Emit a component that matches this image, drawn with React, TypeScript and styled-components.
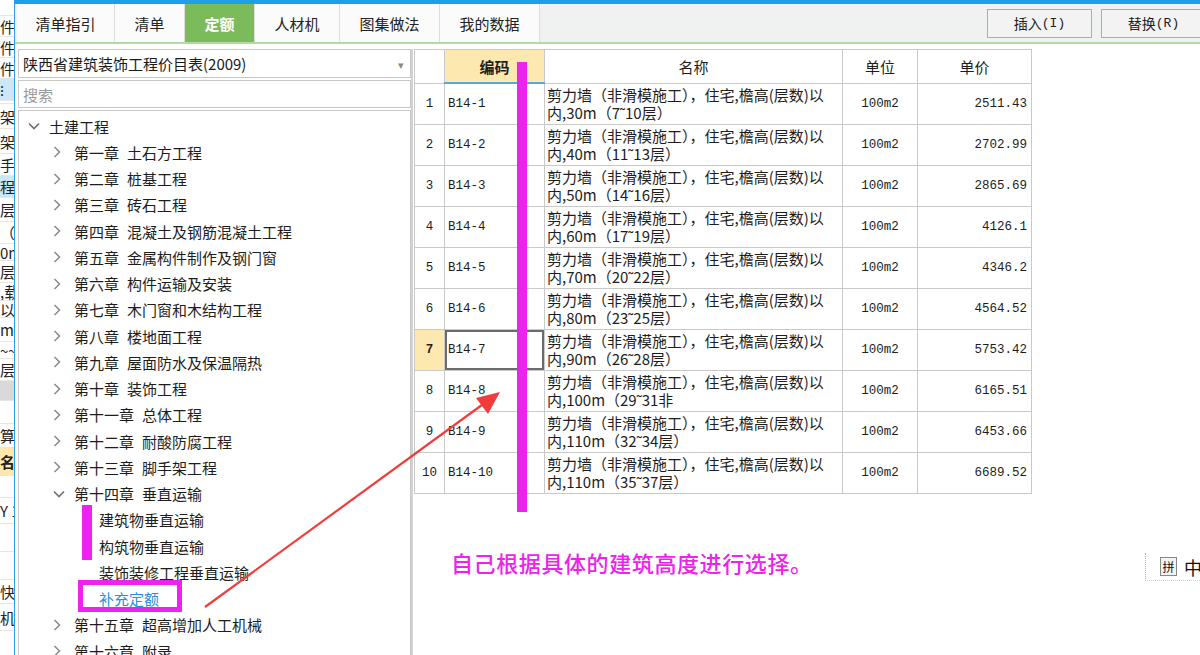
import styled, { createGlobalStyle } from 'styled-components';

const GlobalStyle = createGlobalStyle`
  body {
    margin: 0;
    background: #ffffff;
    font-family: "Noto Sans CJK SC", "Noto Sans", sans-serif;
  }
`;

const MONO = '"Liberation Mono", "Noto Sans CJK SC", monospace';
const MAGENTA = '#ee22ee';

const stripRows = [
  { h: 16, t: '' },
  { h: 21, t: '件' },
  { h: 21, t: '件' },
  { h: 21, t: '件' },
  { h: 22, t: '⁝', bg: '#cce8f8' },
  { h: 3, t: '' },
  { h: 25, t: '架' },
  { h: 25, t: '架' },
  { h: 22, t: '手' },
  { h: 22, t: '程', bg: '#cce8f8' },
  { h: 24, t: '层数' },
  { h: 22, t: '（' },
  { h: 17, t: '0m' },
  { h: 22, t: '层)' },
  { h: 18, t: ',载' },
  { h: 17, t: '以内' },
  { h: 24, t: 'm(' },
  { h: 17, t: '~~' },
  { h: 22, t: '层数' },
  { h: 20, t: '', bg: '#d9d9d9' },
  { h: 23, t: '' },
  { h: 24, t: '算' },
  { h: 28, t: '名', bg: '#fde9b0', bold: true },
  { h: 22, t: '' },
  { h: 26, t: 'Y 10' },
  { h: 28, t: '' },
  { h: 28, t: '' },
  { h: 24, t: '快' },
  { h: 27, t: '机' },
];

const tabs = ['清单指引', '清单', '定额', '人材机', '图集做法', '我的数据'];
const tabWidths = [98, 70, 70, 85, 100, 100];

type TreeRow = { level: number; chapter?: string; label: string; arrow?: 'down' | 'right'; link?: boolean };

const treeRows: TreeRow[] = [
  { level: 0, label: '土建工程', arrow: 'down' },
  { level: 1, chapter: '第一章', label: '土石方工程', arrow: 'right' },
  { level: 1, chapter: '第二章', label: '桩基工程', arrow: 'right' },
  { level: 1, chapter: '第三章', label: '砖石工程', arrow: 'right' },
  { level: 1, chapter: '第四章', label: '混凝土及钢筋混凝土工程', arrow: 'right' },
  { level: 1, chapter: '第五章', label: '金属构件制作及钢门窗', arrow: 'right' },
  { level: 1, chapter: '第六章', label: '构件运输及安装', arrow: 'right' },
  { level: 1, chapter: '第七章', label: '木门窗和木结构工程', arrow: 'right' },
  { level: 1, chapter: '第八章', label: '楼地面工程', arrow: 'right' },
  { level: 1, chapter: '第九章', label: '屋面防水及保温隔热', arrow: 'right' },
  { level: 1, chapter: '第十章', label: '装饰工程', arrow: 'right' },
  { level: 1, chapter: '第十一章', label: '总体工程', arrow: 'right' },
  { level: 1, chapter: '第十二章', label: '耐酸防腐工程', arrow: 'right' },
  { level: 1, chapter: '第十三章', label: '脚手架工程', arrow: 'right' },
  { level: 1, chapter: '第十四章', label: '垂直运输', arrow: 'down' },
  { level: 2, label: '建筑物垂直运输' },
  { level: 2, label: '构筑物垂直运输' },
  { level: 2, label: '装饰装修工程垂直运输' },
  { level: 2, label: '补充定额', link: true },
  { level: 1, chapter: '第十五章', label: '超高增加人工机械', arrow: 'right' },
  { level: 1, chapter: '第十六章', label: '附录', arrow: 'right' },
];

const quotas = [
  { code: 'B14-1', h: '30m', floors: '（7˜10层）', price: '2511.43' },
  { code: 'B14-2', h: '40m', floors: '（11˜13层）', price: '2702.99' },
  { code: 'B14-3', h: '50m', floors: '（14˜16层）', price: '2865.69' },
  { code: 'B14-4', h: '60m', floors: '（17˜19层）', price: '4126.1' },
  { code: 'B14-5', h: '70m', floors: '（20˜22层）', price: '4346.2' },
  { code: 'B14-6', h: '80m', floors: '（23˜25层）', price: '4564.52' },
  { code: 'B14-7', h: '90m', floors: '（26˜28层）', price: '5753.42' },
  { code: 'B14-8', h: '100m', floors: '（29˜31非', price: '6165.51' },
  { code: 'B14-9', h: '110m', floors: '（32˜34层）', price: '6453.66' },
  { code: 'B14-10', h: '110m', floors: '（35˜37层）', price: '6689.52' },
];

const Chevron = ({ dir }: { dir: 'down' | 'right' }) =>
  dir === 'down' ? (
    <svg width="12" height="8" viewBox="0 0 12 8">
      <path d="M1 1.5 L6 6.5 L11 1.5" fill="none" stroke="#6f6f6f" strokeWidth="1.6" />
    </svg>
  ) : (
    <svg width="8" height="12" viewBox="0 0 8 12">
      <path d="M1.5 1 L6.5 6 L1.5 11" fill="none" stroke="#8a8a8a" strokeWidth="1.5" />
    </svg>
  );

export default function App() {
  const selectedRow = 7;
  return (
    <Root>
      <GlobalStyle />
      <BackStrip>
        {stripRows.map((r, i) => (
          <StripRow key={i} $h={r.h} $bg={r.bg} $bold={r.bold}>{r.t}</StripRow>
        ))}
      </BackStrip>
      <Dialog>
        <TabBar>
          {tabs.map((t, i) => (
            <Tab key={t} $w={tabWidths[i]} $active={t === '定额'}>{t}</Tab>
          ))}
          <ToolButtons>
            <ToolButton>插入<Latin>(I)</Latin></ToolButton>
            <ToolButton>替换<Latin>(R)</Latin></ToolButton>
          </ToolButtons>
        </TabBar>
        <Body>
          <LeftPanel>
            <Select>
              <span>陕西省建筑装饰工程价目表(2009)</span>
              <DropArrow>▾</DropArrow>
            </Select>
            <Search>搜索</Search>
            <Tree>
              {treeRows.map((r, i) => (
                <TreeItem key={i} $level={r.level}>
                  <ArrowBox>{r.arrow && <Chevron dir={r.arrow} />}</ArrowBox>
                  {r.chapter && <Chapter>{r.chapter}</Chapter>}
                  <TreeLabel $link={r.link}>{r.label}</TreeLabel>
                </TreeItem>
              ))}
            </Tree>
          </LeftPanel>
          <Splitter />
          <RightPanel>
            <QuotaTable>
              <colgroup>
                <col style={{ width: 30 }} />
                <col style={{ width: 100 }} />
                <col style={{ width: 298 }} />
                <col style={{ width: 75 }} />
                <col style={{ width: 114 }} />
              </colgroup>
              <thead>
                <tr>
                  <HeadCell />
                  <HeadCell $sorted>编码</HeadCell>
                  <HeadCell>名称</HeadCell>
                  <HeadCell>单位</HeadCell>
                  <HeadCell>单价</HeadCell>
                </tr>
              </thead>
              <tbody>
                {quotas.map((q, i) => (
                  <Row key={q.code}>
                    <NumCell $current={i + 1 === selectedRow}>{i + 1}</NumCell>
                    <CodeCell $selected={i + 1 === selectedRow}>{q.code}</CodeCell>
                    <NameCell>
                      <NameLine>剪力墙（非滑模施工），住宅,檐高(层数)以</NameLine>
                      <NameLine>内,{q.h}{q.floors}</NameLine>
                    </NameCell>
                    <UnitCell>100m2</UnitCell>
                    <PriceCell>{q.price}</PriceCell>
                  </Row>
                ))}
              </tbody>
            </QuotaTable>
            <Note>自己根据具体的建筑高度进行选择。</Note>
          </RightPanel>
        </Body>
      </Dialog>

      <TableMark />
      <TreeMark />
      <TreeBox />
      <ArrowLayer width="1200" height="655" viewBox="0 0 1200 655">
        <line x1="205" y1="607" x2="486" y2="402" stroke="#f23c3c" strokeWidth="2.2" />
        <polygon points="500,392 476,398 488,414" fill="#f23c3c" />
      </ArrowLayer>
      <ImeBar>
        <ImeBox>拼</ImeBox>
        <span>中</span>
      </ImeBar>
    </Root>
  );
}

const Root = styled.div`
  position: relative;
  width: 1200px;
  height: 655px;
  display: flex;
  overflow: hidden;
  background: #ffffff;
`;

const BackStrip = styled.div`
  width: 14px;
  flex-shrink: 0;
  display: flex;
  flex-direction: column;
  overflow: hidden;
  border-right: 1px solid #2f9fe3;
  background: #ffffff;
`;

const StripRow = styled.div<{ $h: number; $bg?: string; $bold?: boolean }>`
  height: ${(p) => p.$h}px;
  flex-shrink: 0;
  background: ${(p) => p.$bg || 'transparent'};
  font-size: 15px;
  font-weight: ${(p) => (p.$bold ? 700 : 400)};
  line-height: ${(p) => p.$h}px;
  white-space: nowrap;
  overflow: hidden;
  color: #222;
  border-bottom: 1px solid #e6e6e6;
  box-sizing: border-box;
`;

const Dialog = styled.div`
  flex: 1;
  display: flex;
  flex-direction: column;
  border-top: 4px solid #1e9fe6;
  min-width: 0;
`;

const TabBar = styled.div`
  height: 38px;
  display: flex;
  align-items: stretch;
  padding-left: 2px;
  background: #f0f1f1;
  border-bottom: 2px solid #b5d9a2;
  flex-shrink: 0;
`;

const Tab = styled.div<{ $w: number; $active?: boolean }>`
  width: ${(p) => p.$w}px;
  display: flex;
  align-items: center;
  justify-content: center;
  font-size: 15px;
  font-weight: ${(p) => (p.$active ? 700 : 400)};
  color: ${(p) => (p.$active ? '#ffffff' : '#222222')};
  background: ${(p) => (p.$active ? '#7cbb5b' : '#fafbfa')};
  border-right: 1px solid #dcdfdc;
  box-sizing: border-box;
`;

const ToolButtons = styled.div`
  margin-left: auto;
  display: flex;
  align-items: center;
  gap: 9px;
  margin-right: -6px;
`;

const ToolButton = styled.div`
  width: 105px;
  height: 29px;
  flex-shrink: 0;
  display: flex;
  align-items: center;
  justify-content: center;
  border: 1px solid #adadad;
  background: #f3f3f3;
  box-sizing: border-box;
  font-size: 14px;
  color: #222;
`;

const Latin = styled.span`
  font-family: ${MONO};
  font-size: 13px;
`;

const Body = styled.div`
  flex: 1;
  display: flex;
  padding: 5px 0 0 3px;
  min-height: 0;
`;

const LeftPanel = styled.div`
  width: 393px;
  flex-shrink: 0;
  display: flex;
  flex-direction: column;
  gap: 2px;
`;

const Select = styled.div`
  height: 29px;
  border: 1px solid #c8c8c8;
  box-sizing: border-box;
  display: flex;
  align-items: center;
  justify-content: space-between;
  padding: 0 6px 0 4px;
  font-size: 15px;
  color: #1a1a1a;
`;

const DropArrow = styled.span`
  color: #888;
  font-size: 11px;
`;

const Search = styled.div`
  height: 28px;
  border: 1px solid #c8c8c8;
  box-sizing: border-box;
  display: flex;
  align-items: center;
  padding-left: 4px;
  font-size: 15px;
  color: #9a9a9a;
`;

const Tree = styled.div`
  flex: 1;
  border: 1px solid #c8c8c8;
  border-bottom: none;
  padding-top: 2px;
  overflow: hidden;
`;

const TreeItem = styled.div<{ $level: number }>`
  height: 26.25px;
  display: flex;
  align-items: center;
  padding-left: ${(p) => 6 + p.$level * 25}px;
  font-size: 15px;
  color: #1d1d1d;
  white-space: nowrap;
`;

const ArrowBox = styled.span`
  width: 24px;
  flex-shrink: 0;
  display: flex;
  align-items: center;
  padding-left: 3px;
  box-sizing: border-box;
`;

const Chapter = styled.span`
  margin-right: 8px;
`;

const TreeLabel = styled.span<{ $link?: boolean }>`
  color: ${(p) => (p.$link ? '#2b8fe0' : 'inherit')};
`;

const Splitter = styled.div`
  width: 2px;
  margin: 0 1px 0 0;
  background: #d2d2d2;
  flex-shrink: 0;
`;

const RightPanel = styled.div`
  flex: 1;
  display: flex;
  flex-direction: column;
  min-width: 0;
`;

const QuotaTable = styled.table`
  width: 617px;
  table-layout: fixed;
  border-collapse: collapse;
`;

const HeadCell = styled.th<{ $sorted?: boolean }>`
  height: 32px;
  padding: 0;
  border: 1px solid #c9c9c9;
  border-bottom: ${(p) => (p.$sorted ? '2px solid #55aad6' : '1px solid #c9c9c9')};
  background: ${(p) => (p.$sorted ? '#fde9b0' : '#ffffff')};
  font-size: 15px;
  font-weight: ${(p) => (p.$sorted ? 700 : 400)};
  color: #1d1d1d;
  text-align: center;
`;

const Row = styled.tr`
  height: 41px;
`;

const BaseCell = styled.td`
  padding: 0;
  border: 1px solid #c9c9c9;
  font-family: ${MONO};
  font-size: 12.5px;
  color: #1d1d1d;
  white-space: nowrap;
  overflow: hidden;
`;

const NumCell = styled(BaseCell)<{ $current?: boolean }>`
  text-align: center;
  background: ${(p) => (p.$current ? '#fde9b0' : '#ffffff')};
  font-weight: ${(p) => (p.$current ? 700 : 400)};
`;

const CodeCell = styled(BaseCell)<{ $selected?: boolean }>`
  padding-left: 3px;
  box-shadow: ${(p) => (p.$selected ? 'inset 0 0 0 2px #6b6b6b, inset 2px 0 0 0 #4aa7d8' : 'none')};
`;

const NameCell = styled(BaseCell)`
  padding-left: 2px;
  font-family: "Noto Sans CJK SC", sans-serif;
  font-size: 15px;
`;

const NameLine = styled.div`
  height: 18px;
  line-height: 18px;
`;

const UnitCell = styled(BaseCell)`
  text-align: center;
`;

const PriceCell = styled(BaseCell)`
  text-align: right;
  padding-right: 4px;
`;

const Note = styled.div`
  margin: 55px 0 0 37px;
  font-size: 22px;
  line-height: 26px;
  font-weight: 500;
  color: ${MAGENTA};
  letter-spacing: 0.6px;
`;

const TableMark = styled.div`
  position: absolute;
  left: 517px;
  top: 62px;
  width: 10px;
  height: 450px;
  background: ${MAGENTA};
`;

const TreeMark = styled.div`
  position: absolute;
  left: 82px;
  top: 505px;
  width: 10px;
  height: 55px;
  background: ${MAGENTA};
`;

const TreeBox = styled.div`
  position: absolute;
  left: 78px;
  top: 580px;
  width: 104px;
  height: 32px;
  border: 5px solid ${MAGENTA};
  box-sizing: border-box;
`;

const ArrowLayer = styled.svg`
  position: absolute;
  left: 0;
  top: 0;
  pointer-events: none;
`;

const ImeBar = styled.div`
  position: absolute;
  left: 1145px;
  top: 553px;
  height: 27px;
  display: flex;
  align-items: center;
  gap: 7px;
  padding-left: 14px;
  border-left: 1px dotted #b0b0b0;
  border-bottom: 1px dotted #d0d0d0;
  font-size: 18px;
  color: #111;
`;

const ImeBox = styled.span`
  width: 15px;
  height: 17px;
  display: flex;
  align-items: center;
  justify-content: center;
  border: 1px solid #888;
  font-size: 12px;
  background: #f4f4f4;
`;
